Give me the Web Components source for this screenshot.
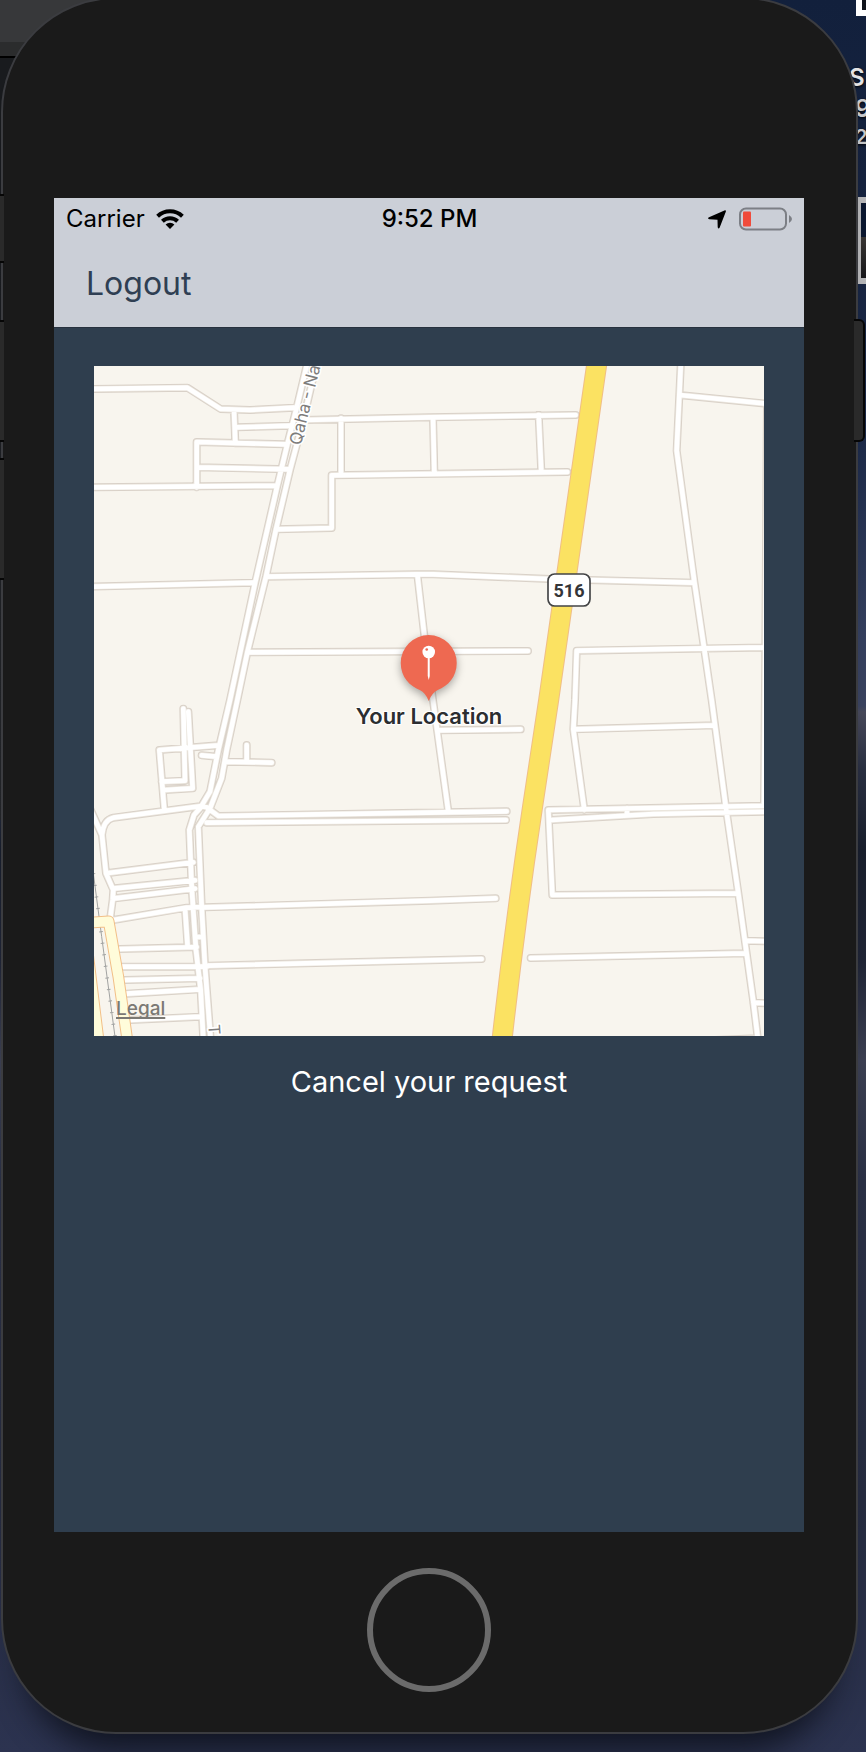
<!DOCTYPE html>
<html lang="en">
<head>
<meta charset="utf-8">
<meta name="viewport" content="width=device-width, initial-scale=1">
<title>Your Location</title>
<style>
  html, body { margin: 0; min-height: 100%; background: #262d42; }
  body { font-family: Inter, "Noto Sans", "Liberation Sans", sans-serif; }
</style>
</head>
<body>
<desktop-backdrop>
  <phone-device>
    <status-bar carrier="Carrier" time="9:52 PM"></status-bar>
    <nav-bar>Logout</nav-bar>
    <request-view>
      <street-map label="Your Location"></street-map>
      <text-button>Cancel your request</text-button>
    </request-view>
  </phone-device>
</desktop-backdrop>

<script>
const define = (name, markup, setup) => {
  const template = document.createElement('template');
  template.innerHTML = markup;
  customElements.define(name, class extends HTMLElement {
    constructor() {
      super();
      this.attachShadow({ mode: 'open' }).append(template.content.cloneNode(true));
    }
    connectedCallback() { if (setup) setup(this, this.shadowRoot); }
  });
};

define('desktop-backdrop', `
  <style>
    :host { display: block; position: relative; overflow: hidden; min-height: 100vh; box-sizing: border-box;
      padding: 0 8px 18px 1px;
      background: linear-gradient(#12203c 0, #16233f 180px, #1d2b4a 440px, #364160 640px, #3b4460 706px, #484a5b 712px, #2a3042 770px, #191f2d 850px, #202536 960px, #3d4153 1060px, #2b3146 1180px, #262c40 1500px, #2c3350 100%); }
    .window { position: absolute; left: 0; top: 0; width: 120px; height: 820px; background: linear-gradient(#37383a 0 42px, #2b2c2d 42px 56px, #000 56px 58px, #191b1e 58px 180px, #242629 100%); }
    .thumb { position: absolute; right: 0; box-sizing: border-box; }
    .top { top: -10px; width: 10px; height: 26px; background: #10131a; border: solid #fff; border-width: 0 0 6px 6px; }
    .photo { top: 197px; width: 12px; height: 87px; background: linear-gradient(#0b1730 45%, #3a3735 45%, #17171a); border: solid #b9b9bb; border-width: 6px 0 6px 7px; }
    .caption { position: absolute; left: calc(100% - 17px); top: 62px; white-space: nowrap; color: #e2e3e5; font-weight: 600; font-size: 24px; line-height: 31px; text-shadow: 0 1px 3px #000; }
    .caption div + div { margin-left: 6px; color: #c8c9cc; }
    .caption .small { font-size: 20px; line-height: 26px; }
    ::slotted(*) { position: relative; }
  </style>
  <div class="window"></div>
  <div class="thumb top"></div>
  <div class="thumb photo"></div>
  <div class="caption"><div>S</div><div>9</div><div class="small">2</div></div>
  <slot></slot>`);

define('phone-device', `
  <style>
    :host { display: block; box-sizing: border-box; margin-top: -3px; padding: 199px 52px 40px 51px; background: #1a1a1a;
      border: 2px solid #3b3c40; border-radius: 115px; box-shadow: 0 40px 32px -24px #0d101add; }
    .screen { display: flex; flex-direction: column; aspect-ratio: 750 / 1334; background: #2f3e4e; }
    .home { display: block; box-sizing: border-box; width: 124px; height: 124px; margin: 36px auto 0; padding: 0;
      border: 6px solid #6b6b6b; border-radius: 50%; background: none; }
    .key { position: absolute; box-sizing: border-box; background: #2a2a2a; border: solid #060606; }
    .left { left: -3px; width: 4px; border-width: 2px 0; }
    .mute { top: 195px; height: 69px; }
    .up { top: 321px; height: 122px; }
    .down { top: 459px; height: 122px; }
    .power { right: -9px; top: 320px; width: 11px; height: 123px; border-width: 2px 2px 2px 0; border-radius: 0 6px 6px 0; }
  </style>
  <span class="key left mute"></span><span class="key left up"></span><span class="key left down"></span><span class="key power"></span>
  <div class="screen"><slot></slot></div>
  <button class="home" type="button" aria-label="Home"></button>`);

define('status-bar', `
  <style>
    :host { display: grid; grid-template-columns: 1fr auto 1fr; align-items: center; height: 42px; padding: 0 11px 0 12px;
      background: #cbcfd7; color: #000; font-size: 24px; line-height: 28px; }
    .start, .end { display: flex; align-items: center; }
    .start { gap: 11px; }
    .end { justify-content: flex-end; gap: 13px; }
    .time { font-weight: 500; }
    svg { display: block; }
  </style>
  <div class="start"><span class="carrier"></span>
    <svg width="28" height="20" viewBox="0 0 28 20" fill="none" stroke="#000" stroke-width="4"><path d="M1.600 7.200A18 18 0 0 1 26.400 7.200"/><path d="M6.400 12.200A11 11 0 0 1 21.600 12.200"/><path d="M9.600 15.600A6.300 6.300 0 0 1 18.400 15.600L14 20Z" fill="#000" stroke="none"/></svg>
  </div>
  <span class="time"></span>
  <div class="end">
    <svg width="18" height="19" viewBox="0 0 18 19"><path d="M17 .3Q18.300 .2 17.800 1.700L11.700 17.500Q10.400 19.400 9.700 17.200L9.500 9.800 1.200 9.200Q-1 8.400 1 7.200Z"/></svg>
    <svg width="54" height="24" viewBox="0 0 54 24"><rect x="1" y="1.500" width="46" height="21" rx="6" fill="none" stroke="#7c7f85" stroke-width="2"/><rect x="4" y="4.500" width="8" height="15" rx="1" fill="#f04b3b"/><path d="M50 8q6 4 0 8Z" fill="#7c7f85"/></svg>
  </div>`, (host, root) => {
    root.querySelector('.carrier').textContent = host.getAttribute('carrier');
    root.querySelector('.time').textContent = host.getAttribute('time');
  });

define('nav-bar', `
  <style>
    :host { display: flex; align-items: center; box-sizing: border-box; height: 88px; padding: 0 32px; background: #cbcfd7; border-bottom: 1px solid #27313e; }
    button { padding: 0; border: 0; background: none; font: inherit; font-size: 32px; line-height: 40px; color: #2f3f53; }
  </style>
  <button type="button"><slot></slot></button>`);

define('request-view', `
  <style>
    :host { display: flex; flex-direction: column; gap: 28px; padding: 38px 40px; }
  </style>
  <slot></slot>`);

define('text-button', `
  <style>
    :host { display: flex; justify-content: center; }
    button { padding: 0; border: 0; background: none; color: #fff; font: inherit; font-size: 29px; line-height: 36px; }
  </style>
  <button type="button"><slot></slot></button>`);

define('street-map', `
  <style>
    :host { display: block; position: relative; aspect-ratio: 1; overflow: hidden; background: #f8f5ee; }
    .map { display: block; width: 100%; height: 100%; }
    .pin { position: absolute; left: 50%; top: 40%; transform: translateX(-50%); display: flex; flex-direction: column; align-items: center; }
    .pin svg { display: block; overflow: visible; filter: drop-shadow(0 3px 4px #0005); }
    .label { color: #2c2e31; font-size: 22px; font-weight: 600; line-height: 28px; white-space: nowrap;
      text-shadow: 0 0 2px #fff, 0 0 2px #fff, 1px 1px 1px #fff, -1px -1px 1px #fff, 1px -1px 1px #fff, -1px 1px 1px #fff; }
    a { position: absolute; left: 22px; bottom: 15px; color: #7b7974; font-size: 19px; font-weight: 500; line-height: 24px; text-decoration-thickness: 2px; text-underline-offset: 2px; text-decoration-skip-ink: none; }
  </style>
  <svg class="map" viewBox="12 18 2010 2010" fill="none" stroke-linecap="round" stroke-linejoin="round" role="img" aria-label="Map">
    <defs>
      <path id="roads" d="M0 87L292 83 392 147 480 150 612 143M432 150L436 250M440 202L600 197M320 382V246L585 253M320 322L600 328M0 382L560 377
        M654 0L620 143 592 253 562 377 495 670 420 1020 385 1170 360 1295 330 1345 312 1365 298 1410 305 1580 318 1770 332 1890 340 2040
        M682 0L640 180 600 330 558 508 528 650 472 877 442 1020 410 1170 395 1255 360 1345 325 1400 335 1640 345 1820 362 2040
        M640 180L1020 172 1457 165M753 175V342M558 508L725 504V346L1432 336M1029 172L1033 338M1346 165L1354 336
        M0 680L490 668M528 650L980 643 1030 643 1380 657 1810 668M982 643L1008 870 1042 1115 1075 1355M475 877L1314 873
        M1773 0L1768 105 1760 272 1813 665 1842 862 1865 1020 1875 1095 1908 1345 1945 1600 1965 1745 1990 1925 2004 2040
        M1768 105L2030 131M2031 131L2026 870 2022 1337M2030 862L1460 872 1455 1020 1450 1108 1483 1350M1450 1108L1875 1096M1042 1111L1292 1108
        M2030 1337L1375 1350 1387 1605 1940 1600M1385 1380L1690 1362 2030 1355M1965 1742L2030 1744M1990 1928L2030 1930M1322 1794L1965 1780M1850 2041L2000 2035
        M1611 1345V1362M345 1642L1020 1622 1217 1615M355 1817L1175 1797M350 1388L1248 1380
        M280 1046L285 1262 215 1265M295 1055L308 1285 225 1290M385 1156L208 1170 223 1350M335 1186L380 1190M405 1205L545 1208M470 1155V1205
        M1250 1354L385 1368 350 1342 335 1338 70 1373Q40 1380 36 1425L48 1540 70 1590 68 1620 60 1680M0 1345L36 1425
        M55 1539L310 1507M75 1585L315 1561M75 1615L315 1586M70 1680L290 1643 330 1641M285 1645L293 1760
        M90 1767L320 1761M95 1820H350M105 1860L330 1855M110 1901L330 1888M120 1980L330 1970M322 1731H340"/>
      <path id="lanes" d="M-5 1688L56 1684 85 1850 112 2040M-10 1750L28 2060" stroke-linejoin="round"/>
      <path id="highway" d="M1522 0L1376 1020 1327 1345Q1275 1690 1236 2040"/>
    </defs>
    <use href="#roads" stroke="#d9d1c8" stroke-width="24"/>
    <use href="#roads" stroke="#ece7df" stroke-width="18"/>
    <use href="#roads" stroke="#fff" stroke-width="14"/>
    <path d="M10 1540L35 1730 75 2030" stroke="#a2a3a2" stroke-width="3"/>
    <path d="M10 1540L35 1730 75 2030" stroke="#a2a3a2" stroke-width="11" stroke-dasharray="3 32" stroke-linecap="butt"/>
    <use href="#lanes" stroke="#f2bf87" stroke-width="35"/>
    <use href="#lanes" stroke="#fffcda" stroke-width="29"/>
    <use href="#highway" stroke="#f0be86" stroke-width="63"/>
    <use href="#highway" stroke="#fbe262" stroke-width="57"/>
    <g font-family="Inter, sans-serif" fill="#7e7d7c" stroke="#fff" stroke-width="10" paint-order="stroke">
      <text transform="translate(632 258) rotate(-76)" font-size="51">Qaha - Nai</text>
      <text transform="translate(355 1994) rotate(86)" font-size="48">T</text>
    </g>
    <rect x="1374" y="642" width="126" height="96" rx="20" fill="#fff" stroke="#434446" stroke-width="5"/>
    <text x="1437" y="710" text-anchor="middle" font-family="'Liberation Sans Narrow', Roboto, sans-serif" font-weight="700" font-size="54" fill="#343538">516</text>
  </svg>
  <div class="pin">
    <svg width="56" height="68" viewBox="0 0 56 68"><path d="M28 1A28 28 0 0 0 0 29C0 43 9 52 19 56Q25 59 28 67Q31 59 37 56C47 52 56 43 56 29A28 28 0 0 0 28 1Z" fill="#ee6951"/><circle cx="28" cy="18" r="6.300" fill="#fff"/><path d="M27 23h2v19l-1 4-1-4Z" fill="#fff"/><circle cx="26" cy="15.500" r="1.300" fill="#ee6951"/></svg>
    <span class="label"></span>
  </div>
  <a href="#legal">Legal</a>`, (host, root) => {
    root.querySelector('.label').textContent = host.getAttribute('label');
  });
</script>
</body>
</html>
